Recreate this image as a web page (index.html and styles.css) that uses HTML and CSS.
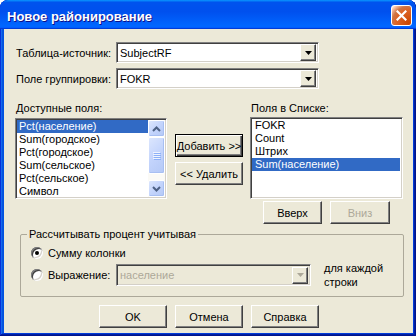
FILE: index.html
```html
<!DOCTYPE html>
<html lang="ru">
<head>
<meta charset="utf-8">
<title>Новое районирование</title>
<link rel="stylesheet" href="styles.css">
</head>
<body>
<div class="window">
  <div class="titlebar">
    <span class="title">Новое районирование</span>
    <button class="close" aria-label="Закрыть">
      <svg width="11" height="11" viewBox="0 0 11 11"><path d="M1.5 1.5 L9.5 9.5 M9.5 1.5 L1.5 9.5" stroke="#fff" stroke-width="2.2" stroke-linecap="square"/></svg>
    </button>
  </div>
  <div class="client">
    <div class="field-row">
      <span class="field-label">Таблица-источник:</span>
      <div class="combo">
        <span class="combo-text">SubjectRF</span>
        <span class="combo-btn"><svg width="7" height="4" viewBox="0 0 7 4"><path d="M0 0 H7 L3.5 4 Z" fill="#000"/></svg></span>
      </div>
    </div>
    <div class="field-row second">
      <span class="field-label">Поле группировки:</span>
      <div class="combo">
        <span class="combo-text">FOKR</span>
        <span class="combo-btn"><svg width="7" height="4" viewBox="0 0 7 4"><path d="M0 0 H7 L3.5 4 Z" fill="#000"/></svg></span>
      </div>
    </div>

    <div class="lists">
      <div class="col-left">
        <div class="cap">Доступные поля:</div>
        <div class="listbox left">
          <div class="items">
            <div class="item sel">Pct(население)</div>
            <div class="item">Sum(городское)</div>
            <div class="item">Pct(городское)</div>
            <div class="item">Sum(сельское)</div>
            <div class="item">Pct(сельское)</div>
            <div class="item">Символ</div>
          </div>
          <div class="scrollbar">
            <span class="sb-btn"><svg width="9" height="6" viewBox="0 0 9 6"><path d="M1 5 L4.5 1.5 L8 5" fill="none" stroke="#4d6185" stroke-width="2"/></svg></span>
            <span class="sb-thumb"><svg width="8" height="8" viewBox="0 0 8 8"><path d="M0 0.5H7M0 2.5H7M0 4.5H7M0 6.5H7" stroke="#eef4fe" stroke-width="1"/><path d="M1 1.5H8M1 3.5H8M1 5.5H8M1 7.5H8" stroke="#8cb0f8" stroke-width="1"/></svg></span>
            <span class="sb-track"></span>
            <span class="sb-btn"><svg width="9" height="6" viewBox="0 0 9 6"><path d="M1 1 L4.5 4.5 L8 1" fill="none" stroke="#4d6185" stroke-width="2"/></svg></span>
          </div>
        </div>
      </div>
      <div class="col-mid">
        <button class="btn default">Добавить &gt;&gt;</button>
        <button class="btn">&lt;&lt; Удалить</button>
      </div>
      <div class="col-right">
        <div class="cap">Поля в Списке:</div>
        <div class="listbox right">
          <div class="items">
            <div class="item">FOKR</div>
            <div class="item">Count</div>
            <div class="item">Штрих</div>
            <div class="item sel">Sum(население)</div>
          </div>
        </div>
        <div class="order-btns">
          <button class="btn up">Вверх</button>
          <button class="btn down" disabled>Вниз</button>
        </div>
      </div>
    </div>

    <fieldset class="group">
      <legend>Рассчитывать процент учитывая</legend>
      <div class="radio-row">
        <span class="radio"><span class="dot"></span></span>
        <span class="radio-label">Сумму колонки</span>
      </div>
      <div class="radio-row second">
        <span class="radio"></span>
        <span class="radio-label expr">Выражение:</span>
        <div class="combo disabled">
          <span class="combo-text">население</span>
          <span class="combo-btn"><svg width="7" height="4" viewBox="0 0 7 4"><path d="M0 0 H7 L3.5 4 Z" fill="#aca899"/></svg></span>
        </div>
        <span class="note">для каждой<br>строки</span>
      </div>
    </fieldset>

    <div class="footer">
      <button class="btn">OK</button>
      <button class="btn">Отмена</button>
      <button class="btn">Справка</button>
    </div>
  </div>
</div>
</body>
</html>
```
FILE: styles.css
```css
* { box-sizing: border-box; }
html, body { margin: 0; padding: 0; background: #fff; }
body {
  font-family: "Liberation Sans", Arial, sans-serif;
  font-size: 11px;
  color: #000;
}
.window {
  width: 416px;
  height: 336px;
  background: #0054e3;
  border-radius: 8px 8px 0 0;
  box-shadow: inset -1px -1px #00138c, inset 1px 1px #0831d9, inset -2px -2px #001ea0, inset 2px 2px #166aee, inset -3px -3px #003bda, inset 3px 3px #0855dd;
  display: flex;
  flex-direction: column;
  overflow: hidden;
}
.titlebar {
  height: 29px;
  flex: none;
  display: flex;
  align-items: center;
  padding: 1px 4px 0 7px;
  border-radius: 8px 8px 0 0;
  background: linear-gradient(180deg, #0997ff, #0053ee 8%, #0050ee 40%, #06f 88%, #06f 93%, #005bff 95%, #003dd7 96%, #003dd7);
}
.title {
  flex: 1;
  color: #fff;
  font-weight: bold;
  font-size: 13px;
  padding-top: 2px;
  text-shadow: 1px 1px #0f1089;
}
.close {
  width: 21px;
  height: 21px;
  padding: 0;
  border: 1px solid #fff;
  border-radius: 3px;
  background: radial-gradient(circle at 90% 90%, #cc4600, #dc6527 55%, #cd7546 70%, #ffccb2 90%, #fff);
  display: flex;
  align-items: center;
  justify-content: center;
}
.client {
  height: 304px;
  margin: 0 3px 0 4px;
  background: #ece9d8;
  padding: 13px 0 0 11px;
}
.field-row { display: flex; align-items: center; height: 21px; }
.field-row.second { margin-top: 5px; }
.field-label { width: 101px; padding-left: 1px; white-space: nowrap; }

.combo {
  width: 203px;
  height: 21px;
  background: #fff;
  border: 1px solid;
  border-color: #808080 #fff #fff #808080;
  box-shadow: inset 1px 1px #404040, inset -1px -1px #d4d0c8;
  display: flex;
  align-items: center;
  padding: 1px 2px 1px 2px;
}
.combo-text { flex: 1; padding-left: 1px; white-space: nowrap; }
.combo-btn {
  width: 16px;
  height: 17px;
  background: #ece9d8;
  border: 1px solid;
  border-color: #fff #404040 #404040 #fff;
  box-shadow: inset -1px -1px #808080;
  display: flex;
  align-items: center;
  justify-content: center;
}
.combo.disabled { width: 195px; height: 22px; background: #ece9d8; color: #aca899; }

.lists { display: flex; margin-top: 13px; }
.cap { height: 15px; line-height: 13px; padding-left: 1px; white-space: nowrap; }
.col-left { width: 152px; }
.col-mid { width: 68px; margin-left: 8px; padding-top: 32px; display: flex; flex-direction: column; gap: 5px; }
.col-right { width: 153px; margin-left: 7px; }

.listbox {
  background: #fff;
  border: 1px solid;
  border-color: #808080 #fff #fff #808080;
  box-shadow: inset 1px 1px #404040, inset -1px -1px #d4d0c8;
  padding: 1px;
  display: flex;
}
.listbox.left { height: 81px; margin-top: 1px; }
.listbox.right { height: 82px; padding: 1px 2px 1px 1px; }
.items { flex: 1; }
.item { height: 13px; line-height: 13px; padding-left: 2px; white-space: nowrap; }
.listbox.right .item { padding-left: 3px; }
.item.sel { background: #316ac5; color: #fff; }

.scrollbar { width: 17px; display: flex; flex-direction: column; background: #fbfaf6; }
.sb-btn, .sb-thumb {
  border: 1px solid #fff;
  border-radius: 2px;
  background: linear-gradient(135deg, #dce6fd, #c3d4fc 50%, #b4c8f6);
  box-shadow: inset -1px -1px #a8bff2;
  display: flex;
  align-items: center;
  justify-content: center;
}
.sb-btn { height: 17px; }
.sb-thumb { height: 37px; }
.sb-track { flex: 1; }

.btn {
  font: inherit;
  color: #000;
  height: 23px;
  padding: 0;
  background: #ece9d8;
  border: 1px solid;
  border-color: #fff #404040 #404040 #fff;
  box-shadow: inset -1px -1px #808080;
  white-space: nowrap;
}
.btn.default {
  border: 1px solid #000;
  box-shadow: inset 1px 1px #fff, inset -1px -1px #404040, inset -2px -2px #808080;
}
.btn:disabled { color: #aca899; }
.order-btns { display: flex; margin-top: 2px; padding-left: 13px; gap: 8px; }
.btn.up { width: 59px; }
.btn.down { width: 60px; }

.group {
  margin: 4px 0 0 5px;
  width: 384px;
  border: 1px solid #aca899;
  border-radius: 2px;
  padding: 0 0 7px 0;
  min-width: 0;
}
.group legend { margin-left: 6px; padding: 0 2px; line-height: 13px; }
.radio-row { display: flex; align-items: center; padding-left: 10px; margin-top: 5px; height: 13px; }
.radio-row.second { margin-top: 2px; height: 28px; }
.radio {
  width: 12px;
  height: 12px;
  border-radius: 50%;
  background: #fff;
  box-shadow: inset 1px 1px #808080, inset -1px -1px #fff, inset 2px 2px #404040, inset -2px -2px #d4d0c8;
  display: flex;
  align-items: center;
  justify-content: center;
}
.dot { width: 4px; height: 4px; border-radius: 50%; background: #000; }
.radio-label { margin-left: 5px; white-space: nowrap; }
.radio-label.expr { width: 68px; }
.note { margin-left: 13px; line-height: 14px; }

.footer { display: flex; gap: 8px; margin-top: 8px; padding-left: 84px; }
.footer .btn { width: 68px; }
```
